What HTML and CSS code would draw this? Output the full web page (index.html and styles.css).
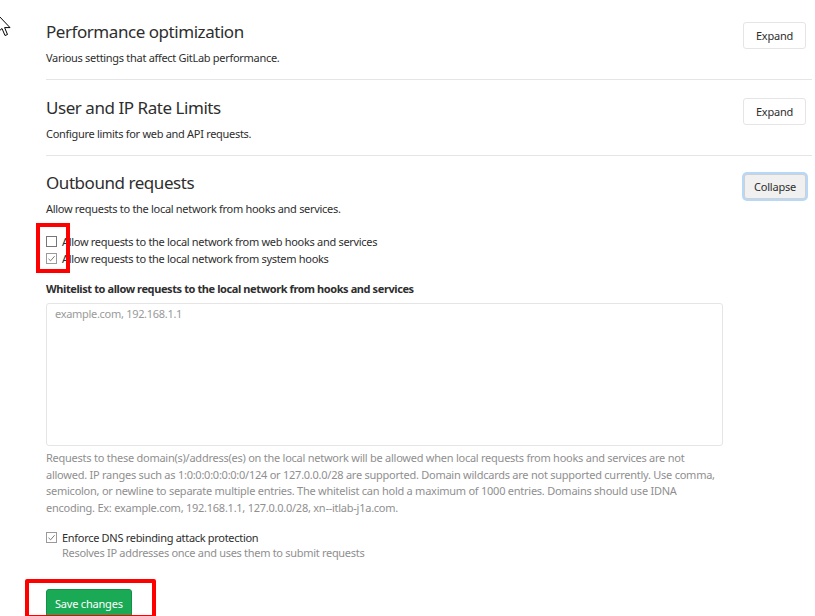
FILE: index.html
```html
<!DOCTYPE html>
<html>
<head>
<meta charset="utf-8">
<link rel="stylesheet" href="styles.css">
</head>
<body>
<div class="page">
  <section class="panel">
    <div class="panel-head">
      <div>
        <h4>Performance optimization</h4>
        <p class="desc">Various settings that affect GitLab performance.</p>
      </div>
      <button class="btn">Expand</button>
    </div>
  </section>
  <section class="panel">
    <div class="panel-head">
      <div>
        <h4>User and IP Rate Limits</h4>
        <p class="desc">Configure limits for web and API requests.</p>
      </div>
      <button class="btn">Expand</button>
    </div>
  </section>
  <section class="panel open">
    <div class="panel-head">
      <div>
        <h4>Outbound requests</h4>
        <p class="desc">Allow requests to the local network from hooks and services.</p>
      </div>
      <button class="btn focus">Collapse</button>
    </div>
    <div class="form">
      <div class="checks">
        <label class="check"><span class="box"></span>Allow requests to the local network from web hooks and services</label>
        <label class="check"><span class="box checked"><svg viewBox="0 0 11 11"><path d="M2.5 5.8 L4.6 7.8 L8.6 3.2" fill="none" stroke="#7a7a7a" stroke-width="1"/></svg></span>Allow requests to the local network from system hooks</label>
      </div>
      <div class="field">
        <div class="field-label">Whitelist to allow requests to the local network from hooks and services</div>
        <div class="textarea"><span class="placeholder">example.com, 192.168.1.1</span></div>
        <p class="help">Requests to these domain(s)/address(es) on the local network will be allowed when local requests from hooks and services are not allowed. IP ranges such as 1:0:0:0:0:0:0:0/124 or 127.0.0.0/28 are supported. Domain wildcards are not supported currently. Use comma, semicolon, or newline to separate multiple entries. The whitelist can hold a maximum of 1000 entries. Domains should use IDNA encoding. Ex: example.com, 192.168.1.1, 127.0.0.0/28, xn--itlab-j1a.com.</p>
      </div>
      <div class="dns">
        <label class="check"><span class="box checked"><svg viewBox="0 0 11 11"><path d="M2.5 5.8 L4.6 7.8 L8.6 3.2" fill="none" stroke="#7a7a7a" stroke-width="1"/></svg></span>Enforce DNS rebinding attack protection</label>
        <div class="subhelp">Resolves IP addresses once and uses them to submit requests</div>
      </div>
      <button class="btn-save">Save changes</button>
    </div>
  </section>
</div>
<div class="mark mark-checks"></div>
<div class="mark mark-save"></div>
<svg class="cursor" width="16" height="24" viewBox="0 0 16 24"><path d="M-2 0 L-2 17 L2 13.5 L5 20.5 L7.5 19.5 L4.6 12.6 L10 12.6 Z" fill="#fff" stroke="#000" stroke-width="1"/></svg>
</body>
</html>
```
FILE: styles.css
```css
html, body { margin: 0; padding: 0; background: #fff; }
body {
  font-family: "Noto Sans", "Open Sans", sans-serif;
  color: #2e2e2e;
  width: 815px;
  height: 616px;
  overflow: hidden;
  position: relative;
  font-size: 11px;
  letter-spacing: -0.3px;
}
.page { padding: 0 3px 0 46px; }
.panel { border-bottom: 1px solid #e5e5e5; padding: 20px 0 13px; }
.panel + .panel { padding-top: 16px; }
.panel.open { border-bottom: none; padding-top: 15px; }
.panel-head { display: flex; justify-content: space-between; align-items: flex-start; padding-right: 6px; }
h4 { margin: 0; font-size: 17px; font-weight: 400; line-height: 24px; color: #2e2e2e; letter-spacing: -0.45px; }
.desc { margin: 6px 0 0; font-size: 11px; line-height: 16px; }
.btn {
  font-family: inherit; font-size: 11px; color: #2e2e2e; letter-spacing: -0.2px;
  background: #fff; border: 1px solid #e5e5e5; border-radius: 3px;
  height: 27px; padding: 0 6px; margin-top: 2px; width: 63px;
}
.btn.focus { background: #f0f0f0; border-color: #d0d0d0; box-shadow: 0 0 0 2px #b8d8f8; margin-top: 3px; height: 25px; width: 62px; }
.form { width: 677px; }
.checks { margin-top: 17px; display: flex; flex-direction: column; gap: 2px; }
.check { display: flex; align-items: center; font-size: 11px; line-height: 15px; color: #2e2e2e; }
.box { width: 9px; height: 9px; border: 1px solid #767676; background: #fff; margin-right: 5px; position: relative; flex: none; }
.box.checked { border-color: #9a9a9a; }
.box svg { position: absolute; left: -1px; top: -1px; width: 11px; height: 11px; }
.field { margin-top: 15px; }
.field-label { font-size: 11px; font-weight: 700; line-height: 16px; letter-spacing: -0.4px; }
.textarea { margin-top: 6px; height: 143px; border: 1px solid #e5e5e5; border-radius: 3px; padding: 2px 8px; box-sizing: border-box; }
.placeholder { font-size: 11px; color: #9a9a9a; line-height: 16px; }
.help { margin: 4px 0 0; font-size: 11px; line-height: 16.7px; color: #8f8f8f; letter-spacing: -0.25px; }
.dns { margin-top: 13px; }
.subhelp { padding-left: 16px; font-size: 11px; line-height: 16px; color: #8f8f8f; }
.btn-save {
  margin-top: 28px; font-family: inherit; font-size: 11px; color: #fff; letter-spacing: -0.2px;
  background: #1aaa55; border: 1px solid #168f48; border-radius: 3px;
  height: 30px; padding: 0 8px;
}
.mark { position: absolute; border: 4px solid #f00; box-sizing: border-box; }
.mark-checks { left: 36px; top: 223px; width: 34px; height: 50px; }
.mark-save { left: 25px; top: 579px; width: 131px; height: 40px; border-radius: 2px; }
.cursor { position: absolute; left: 0; top: 15px; overflow: visible; }
```
